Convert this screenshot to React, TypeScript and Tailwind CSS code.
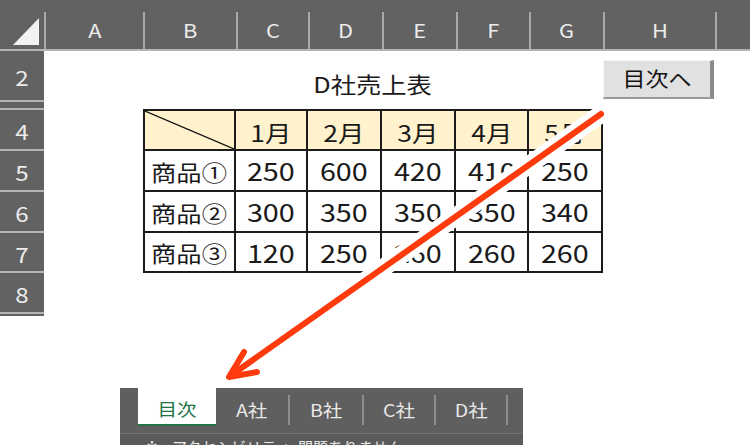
import { PersonStanding } from "lucide-react";

const columns = [
  { label: "A", width: "w-[99px]" },
  { label: "B", width: "w-[93px]" },
  { label: "C", width: "w-[72px]" },
  { label: "D", width: "w-[74px]" },
  { label: "E", width: "w-[74px]" },
  { label: "F", width: "w-[73px]" },
  { label: "G", width: "w-[74px]" },
  { label: "H", width: "w-[112px]" },
];

const rowHeaders = [
  { label: "2", height: "h-[51px]" },
  { label: "", height: "h-[8px]" },
  { label: "4", height: "h-[41px]" },
  { label: "5", height: "h-[41px]" },
  { label: "6", height: "h-[41px]" },
  { label: "7", height: "h-[40px]" },
  { label: "8", height: "h-[41px]" },
];

const months = ["1月", "2月", "3月", "4月", "5月"];

const products = [
  { name: "商品①", values: [250, 600, 420, 410, 250], height: "h-[41px]" },
  { name: "商品②", values: [300, 350, 350, 350, 340], height: "h-[41px]" },
  { name: "商品③", values: [120, 250, 260, 260, 260], height: "h-[40px]" },
];

const valueWidths = ["w-[72px]", "w-[74px]", "w-[74px]", "w-[73px]", "w-[74px]"];

const tabs = [
  { label: "A社", width: "w-[72px]" },
  { label: "B社", width: "w-[72px]" },
  { label: "C社", width: "w-[70px]" },
  { label: "D社", width: "w-[70px]" },
];

function Wide({ children, className = "" }: { children: React.ReactNode; className?: string }) {
  return <span className={`inline-block scale-x-[1.15] ${className}`}>{children}</span>;
}

function ColumnHeader() {
  return (
    <div className="flex h-[51px] border-b-2 border-[#b4b4b4] bg-[#626262] pt-[12px]">
      <div className="relative w-[44px]">
        <svg width="44" height="38" className="absolute left-0 top-0">
          <polygon points="39,6 39,33 13,33" fill="#f2f2f2" />
        </svg>
      </div>
      {columns.map((c) => (
        <div
          key={c.label}
          className={`${c.width} flex items-center justify-center border-l-2 border-[#a9a9a9] text-[19px] text-[#ececec]`}
        >
          <Wide>{c.label}</Wide>
        </div>
      ))}
      <div className="flex-1 border-l-2 border-[#a9a9a9]" />
    </div>
  );
}

function RowHeaders() {
  return (
    <div className="w-[44px] bg-[#626262] pb-[2px]">
      {rowHeaders.map((r, i) => (
        <div
          key={i}
          className={`${r.height} flex items-center justify-center border-b-2 border-[#b4b4b4] pt-1 text-[21px] leading-none text-[#ececec]`}
        >
          {r.label && <Wide>{r.label}</Wide>}
        </div>
      ))}
    </div>
  );
}

function SalesTable() {
  return (
    <div className="ml-[99px] w-[460px] border-l-2 border-t-2 border-[#1c1c1c] text-[23px] leading-none text-[#1a1a1a]">
      <div className="flex h-[40px] bg-[#fff2cc]">
        <div className="relative w-[91px] border-b-2 border-r-2 border-[#1c1c1c]">
          <svg className="absolute inset-0 h-full w-full" preserveAspectRatio="none" viewBox="0 0 89 38">
            <line x1="0" y1="0" x2="89" y2="38" stroke="#111" strokeWidth="1.2" />
          </svg>
        </div>
        {months.map((m, i) => (
          <div
            key={m}
            className={`${valueWidths[i]} flex items-center justify-center border-b-2 border-r-2 border-[#1c1c1c] pt-1`}
          >
            <Wide>{m}</Wide>
          </div>
        ))}
      </div>
      {products.map((p) => (
        <div key={p.name} className={`flex ${p.height} bg-white`}>
          <div className="flex w-[91px] items-center justify-center border-b-2 border-r-2 border-[#1c1c1c] text-[22px]">
            <Wide>{p.name}</Wide>
          </div>
          {p.values.map((v, i) => (
            <div
              key={i}
              className={`${valueWidths[i]} flex items-center justify-center border-b-2 border-r-2 border-[#1c1c1c]`}
            >
              <Wide className="text-[25px]">{v}</Wide>
            </div>
          ))}
        </div>
      ))}
    </div>
  );
}

function SheetTabs() {
  return (
    <div className="ml-[120px] mt-[72px] w-[403px] bg-[#5f5f5f]">
      <div className="flex h-[45px] items-start pl-[18px] text-[17px] leading-none text-[#e8e8e8]">
        <div className="flex h-[38px] w-[78px] items-center justify-center border-b-2 border-[#217346] bg-white pt-1 text-[#217346]">
          <Wide>目次</Wide>
        </div>
        {tabs.map((t) => (
          <div key={t.label} className="flex">
            <div className={`${t.width} flex h-[38px] items-center justify-center pt-1`}>
              <Wide>{t.label}</Wide>
            </div>
            <div className="mt-[7px] h-[30px] w-[2px] bg-[#8e8e8e]" />
          </div>
        ))}
      </div>
      <div className="h-[12px] overflow-hidden border-t border-[#737373] bg-[#5a5a5a]">
        <div className="flex items-start gap-3 pl-[24px] pt-[5px] text-[15px] leading-none text-[#ececec]">
          <PersonStanding size={16} strokeWidth={2} />
          <span>アクセシビリティ: 問題ありません</span>
        </div>
      </div>
    </div>
  );
}

function Arrow() {
  const shaft = { x1: 601, y1: 114, x2: 233, y2: 374 };
  const head = "244,352 229,377 257,372";
  return (
    <svg width="750" height="445" className="pointer-events-none absolute left-0 top-0">
      <g stroke="#ffffff" strokeWidth="18" strokeLinecap="round" strokeLinejoin="round" fill="none">
        <line {...shaft} />
        <polyline points={head} />
      </g>
      <g stroke="#ff3a0c" strokeWidth="6" strokeLinecap="round" strokeLinejoin="round" fill="none">
        <line {...shaft} />
        <polyline points={head} />
      </g>
    </svg>
  );
}

export default function App() {
  return (
    <div className="relative h-[445px] w-[750px] overflow-hidden bg-white font-['Noto_Sans_CJK_JP',sans-serif]">
      <ColumnHeader />
      <div className="flex">
        <RowHeaders />
        <div className="flex-1">
          <div className="flex h-[51px]">
            <div className="ml-[99px] flex w-[460px] items-center justify-center pt-[12px] text-[22px] leading-none text-[#1a1a1a]">
              <Wide>D社売上表</Wide>
            </div>
            <div className="mt-[9px] flex h-[39px] w-[111px] items-center justify-center border-l border-t border-[#f7f7f7] border-b-2 border-r-4 border-b-[#9a9a9a] border-r-[#8a8a8a] bg-[#e1e1e1] text-[20px] leading-none text-[#111]">
              <Wide>目次へ</Wide>
            </div>
          </div>
          <div className="h-[7px]" />
          <SalesTable />
        </div>
      </div>
      <SheetTabs />
      <Arrow />
    </div>
  );
}
